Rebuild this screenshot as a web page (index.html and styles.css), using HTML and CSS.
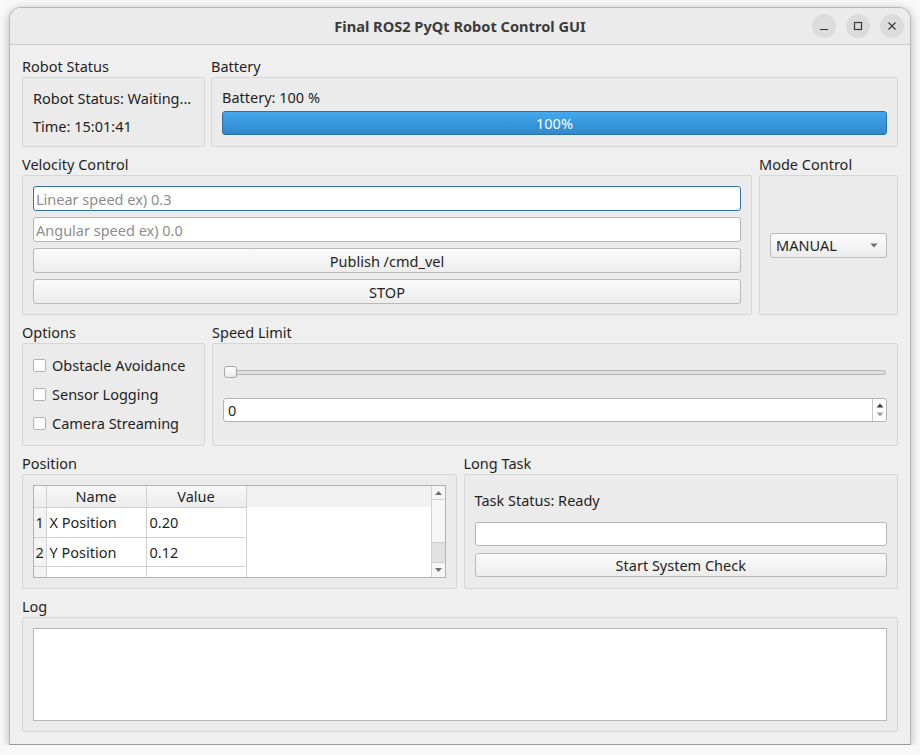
FILE: index.html
```html
<!DOCTYPE html>
<html lang="en">
<head>
  <meta charset="UTF-8" />
  <title>Final ROS2 PyQt Robot Control GUI</title>
  <link rel="stylesheet" href="styles.css">
</head>
<body>

  <div class="window">
    <div class="titlebar">
      <span></span>
      <span class="title">Final ROS2 PyQt Robot Control GUI</span>
      <div class="wm-buttons">
        <span class="wm-btn">
          <svg width="10" height="10" viewBox="0 0 10 10"><path d="M1 8.5h8" stroke="#3a3a3a" stroke-width="1.2"/></svg>
        </span>
        <span class="wm-btn">
          <svg width="10" height="10" viewBox="0 0 10 10"><rect x="1.5" y="1.5" width="7" height="7" fill="none" stroke="#3a3a3a" stroke-width="1.2"/></svg>
        </span>
        <span class="wm-btn">
          <svg width="10" height="10" viewBox="0 0 10 10"><path d="M1.5 1.5l7 7M8.5 1.5l-7 7" stroke="#3a3a3a" stroke-width="1.2"/></svg>
        </span>
      </div>
    </div>

    <div class="content">

      <div class="row row-top">
        <section class="group">
          <div class="group-title">Robot Status</div>
          <div class="frame status-frame">
            <div class="label">Robot Status: Waiting...</div>
            <div class="label">Time: 15:01:41</div>
          </div>
        </section>
        <section class="group">
          <div class="group-title">Battery</div>
          <div class="frame battery-frame">
            <div class="label">Battery: 100 %</div>
            <div class="progress full">100%</div>
          </div>
        </section>
      </div>

      <div class="row row-velocity">
        <section class="group">
          <div class="group-title">Velocity Control</div>
          <div class="frame stack">
            <input class="line-edit focused" type="text" placeholder="Linear speed ex) 0.3">
            <input class="line-edit" type="text" placeholder="Angular speed ex) 0.0">
            <button class="push">Publish /cmd_vel</button>
            <button class="push">STOP</button>
          </div>
        </section>
        <section class="group">
          <div class="group-title">Mode Control</div>
          <div class="frame mode-frame">
            <div class="combo">
              <span>MANUAL</span>
              <svg width="8" height="5" viewBox="0 0 8 5"><path d="M0.5 0.5h7L4 4.5z" fill="#6e6e6e"/></svg>
            </div>
          </div>
        </section>
      </div>

      <div class="row row-options">
        <section class="group">
          <div class="group-title">Options</div>
          <div class="frame options-frame">
            <label class="check"><span class="box"></span>Obstacle Avoidance</label>
            <label class="check"><span class="box"></span>Sensor Logging</label>
            <label class="check"><span class="box"></span>Camera Streaming</label>
          </div>
        </section>
        <section class="group">
          <div class="group-title">Speed Limit</div>
          <div class="frame speed-frame">
            <div class="slider">
              <div class="groove"></div>
              <div class="handle"></div>
            </div>
            <div class="spinbox">
              <span class="spin-value">0</span>
              <div class="spin-arrows">
                <svg width="8" height="5" viewBox="0 0 8 5"><path d="M0.5 4.5h7L4 0.5z" fill="#3c3c3c"/></svg>
                <svg width="8" height="5" viewBox="0 0 8 5"><path d="M0.5 0.5h7L4 4.5z" fill="#a0a0a0"/></svg>
              </div>
            </div>
          </div>
        </section>
      </div>

      <div class="row row-bottom">
        <section class="group">
          <div class="group-title">Position</div>
          <div class="frame table-frame">
            <div class="table-view">
              <div class="viewport">
                <table class="grid">
                  <tr>
                    <th class="corner"></th>
                    <th>Name</th>
                    <th>Value</th>
                  </tr>
                  <tr class="r1">
                    <td class="rowhead">1</td>
                    <td>X Position</td>
                    <td>0.20</td>
                  </tr>
                  <tr class="r2">
                    <td class="rowhead">2</td>
                    <td>Y Position</td>
                    <td>0.12</td>
                  </tr>
                  <tr class="r3">
                    <td class="rowhead"></td>
                    <td></td>
                    <td></td>
                  </tr>
                </table>
              </div>
              <div class="scrollbar">
                <div class="sb-btn sb-up">
                  <svg width="7" height="4" viewBox="0 0 7 4"><path d="M0 4h7L3.5 0z" fill="#707070"/></svg>
                </div>
                <div class="sb-track"></div>
                <div class="sb-handle"></div>
                <div class="sb-btn sb-down">
                  <svg width="7" height="4" viewBox="0 0 7 4"><path d="M0 0h7L3.5 4z" fill="#707070"/></svg>
                </div>
              </div>
            </div>
          </div>
        </section>
        <section class="group">
          <div class="group-title">Long Task</div>
          <div class="frame task-frame">
            <div class="label task-label">Task Status: Ready</div>
            <div class="progress empty"></div>
            <button class="push">Start System Check</button>
          </div>
        </section>
      </div>

      <div class="row row-log">
        <section class="group">
          <div class="group-title">Log</div>
          <div class="frame log-frame">
            <div class="text-edit"></div>
          </div>
        </section>
      </div>

    </div>
  </div>

</body>
</html>
```

FILE: styles.css
```css
* {
  box-sizing: border-box;
}

body {
  margin: 0;
  background-color: #f8f8f8;
  font-family: 'Noto Sans', 'DejaVu Sans', sans-serif;
  font-size: 14.5px;
  color: #1f1f1f;
}

.window {
  width: 902px;
  height: 738px;
  margin: 7px 0 0 9px;
  display: flex;
  flex-direction: column;
  background-color: #efefef;
  border: 1px solid #b8b8b8;
  border-bottom-color: #9c9c9c;
  border-radius: 12px 12px 0 0;
  box-shadow: 0 2px 10px rgba(0, 0, 0, 0.28);
  overflow: hidden;
}

/* title bar */
.titlebar {
  height: 37px;
  flex: none;
  display: grid;
  grid-template-columns: 1fr auto 1fr;
  align-items: center;
  background-color: #ebebeb;
  border-bottom: 1px solid #cbcbcb;
}

.title {
  font-weight: bold;
  font-size: 14.6px;
  color: #3b3b3b;
}

.wm-buttons {
  justify-self: end;
  display: flex;
  gap: 10px;
  padding-right: 6px;
}

.wm-btn {
  width: 24px;
  height: 24px;
  border-radius: 50%;
  background-color: #dcdcdc;
  display: flex;
  align-items: center;
  justify-content: center;
}

/* layout */
.content {
  flex: 1;
  padding: 10px 12px 12px;
  display: flex;
  flex-direction: column;
  gap: 6px;
}

.row {
  display: grid;
  flex: none;
}

.row-top {
  height: 92px;
  grid-template-columns: 183px 1fr;
  gap: 6px;
}

.row-velocity {
  height: 162px;
  grid-template-columns: 730px 1fr;
  gap: 7px;
}

.row-options {
  height: 125px;
  grid-template-columns: 183px 1fr;
  gap: 7px;
}

.row-bottom {
  height: 137px;
  grid-template-columns: 1fr 1fr;
  gap: 7px;
}

.row-log {
  height: 137px;
}

.group {
  display: flex;
  flex-direction: column;
  min-width: 0;
  min-height: 0;
}

.group-title {
  height: 22px;
  line-height: 22px;
  white-space: nowrap;
}

.frame {
  flex: 1;
  min-height: 0;
  padding: 10px;
  background-color: #ebebeb;
  border: 1px solid #d6d6d6;
  border-radius: 2px;
}

.label {
  line-height: 20px;
  white-space: nowrap;
}

/* status + battery */
.status-frame {
  display: flex;
  flex-direction: column;
  justify-content: space-between;
}

.battery-frame {
  display: flex;
  flex-direction: column;
  justify-content: space-between;
  padding-bottom: 11px;
}

.battery-frame .label {
  line-height: 18px;
}

.progress {
  height: 24px;
  border-radius: 3px;
  text-align: center;
  line-height: 22px;
}

.progress.full {
  background: linear-gradient(#43a8ec, #2f88cd);
  border: 1px solid #2c6ea6;
  color: #ffffff;
}

.progress.empty {
  background-color: #ffffff;
  border: 1px solid #b5b5b5;
}

/* velocity */
.stack {
  display: flex;
  flex-direction: column;
  gap: 6px;
}

.line-edit {
  height: 25px;
  width: 100%;
  padding: 0 2px;
  font-family: inherit;
  font-size: 14.5px;
  color: #1f1f1f;
  background-color: #ffffff;
  border: 1px solid #b6b6b6;
  border-radius: 3px;
  outline: none;
}

.line-edit::placeholder {
  color: #8d8d8d;
}

.line-edit.focused {
  border-color: #3470ac;
}

.push {
  height: 25px;
  width: 100%;
  font-family: inherit;
  font-size: 14.5px;
  color: #1f1f1f;
  background: linear-gradient(#fbfbfb, #ececec);
  border: 1px solid #b9b9b9;
  border-radius: 3px;
  padding: 0;
}

.mode-frame {
  display: flex;
  align-items: center;
}

.combo {
  width: 100%;
  height: 25px;
  display: flex;
  align-items: center;
  justify-content: space-between;
  padding: 0 8px 0 5px;
  background: linear-gradient(#fbfbfb, #ececec);
  border: 1px solid #b9b9b9;
  border-radius: 3px;
}

/* options */
.options-frame {
  display: flex;
  flex-direction: column;
  gap: 7px;
}

.check {
  height: 22px;
  display: flex;
  align-items: center;
  gap: 6px;
  white-space: nowrap;
}

.box {
  width: 13px;
  height: 13px;
  background-color: #ffffff;
  border: 1px solid #b3b3b3;
  border-radius: 2px;
  flex: none;
}

/* speed limit */
.speed-frame {
  padding-top: 22px;
}

.slider {
  height: 12px;
  display: flex;
  align-items: center;
  position: relative;
  margin: 0 1px 20px;
}

.groove {
  flex: 1;
  height: 5px;
  background-color: #dedede;
  border: 1px solid #b4b4b4;
  border-radius: 3px;
}

.handle {
  position: absolute;
  left: 0;
  top: 0;
  width: 13px;
  height: 12px;
  background: linear-gradient(#ffffff, #ececec);
  border: 1px solid #a6a6a6;
  border-radius: 3px;
}

.spinbox {
  height: 24px;
  display: flex;
  background-color: #ffffff;
  border: 1px solid #b3b3b3;
  border-radius: 3px;
}

.spin-value {
  flex: 1;
  padding-left: 4px;
  line-height: 22px;
}

.spin-arrows {
  width: 14px;
  border-left: 1px solid #c8c8c8;
  display: flex;
  flex-direction: column;
  align-items: center;
  justify-content: center;
  gap: 4px;
}

/* table */
.table-view {
  height: 93px;
  display: flex;
  background-color: #ffffff;
  border: 1px solid #b3b3b3;
  overflow: hidden;
}

.viewport {
  flex: 1;
  background: linear-gradient(#f1f1f1 0, #f1f1f1 21px, #ffffff 21px);
  overflow: hidden;
}

.grid {
  border-collapse: collapse;
  background-color: #ffffff;
}

.grid th {
  height: 21px;
  width: 100px;
  padding: 0;
  font-weight: normal;
  background: linear-gradient(#f8f8f8, #ececec);
  border-right: 1px solid #d0d0d0;
  border-bottom: 1px solid #d0d0d0;
}

.grid th.corner {
  width: 12px;
}

.grid td {
  padding: 0 0 0 3px;
  border-right: 1px solid #d0d0d0;
  border-bottom: 1px solid #d0d0d0;
  white-space: nowrap;
}

.grid .r1 td {
  height: 30px;
}

.grid .r2 td {
  height: 29px;
}

.grid .r3 td {
  height: 20px;
}

.grid td.rowhead {
  width: 12px;
  padding: 0;
  text-align: center;
  background-color: #f3f3f3;
}

.scrollbar {
  width: 14px;
  flex: none;
  display: flex;
  flex-direction: column;
  border-left: 1px solid #d2d2d2;
  background-color: #f6f6f6;
}

.sb-btn {
  height: 14px;
  display: flex;
  align-items: center;
  justify-content: center;
}

.sb-up {
  border-bottom: 1px solid #d2d2d2;
}

.sb-track {
  flex: 1;
}

.sb-handle {
  height: 21px;
  background-color: #e1e1e1;
  border-top: 1px solid #cfcfcf;
  border-bottom: 1px solid #cfcfcf;
}

/* long task */
.task-frame {
  display: flex;
  flex-direction: column;
  gap: 7px;
}

.task-label {
  line-height: 30px;
}

.task-frame .progress {
  flex: none;
}

.task-frame .push {
  height: 24px;
  flex: none;
}

/* log */
.log-frame {
  display: flex;
}

.text-edit {
  flex: 1;
  background-color: #ffffff;
  border: 1px solid #b5b5b5;
}
```
